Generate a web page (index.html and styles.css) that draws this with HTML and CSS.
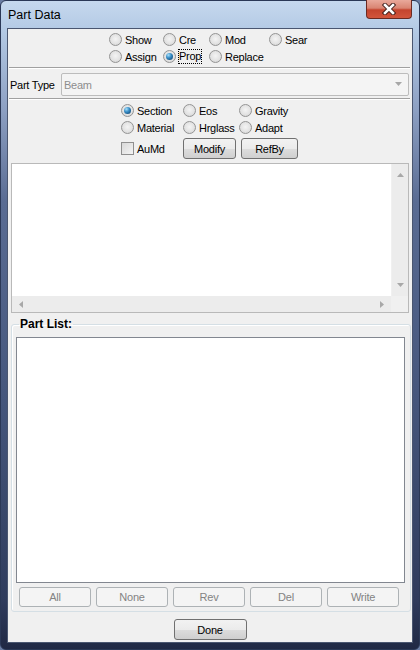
FILE: index.html
```html
<!DOCTYPE html>
<html lang="en">
<head>
    <meta charset="UTF-8">
    <meta name="viewport" content="width=device-width, initial-scale=1.0">
    <title>Part Data</title>
    <link rel="stylesheet" href="styles.css">
</head>
<body>
    <div class="window">
        <div class="titlebar">
            <span class="title">Part Data</span>
            <div class="close-btn">
                <svg width="16" height="12" viewBox="0 0 16 12">
                    <path d="M4 2 L12 10 M12 2 L4 10" stroke="#3a1a16" stroke-width="4.4" stroke-linecap="square"/>
                    <path d="M4 2 L12 10 M12 2 L4 10" stroke="#ffffff" stroke-width="2.6" stroke-linecap="square"/>
                </svg>
            </div>
        </div>

        <div class="client">
            <div class="mode-group">
                <label class="opt"><span class="radio"></span>Show</label>
                <label class="opt"><span class="radio"></span>Cre</label>
                <label class="opt"><span class="radio"></span>Mod</label>
                <label class="opt"><span class="radio"></span>Sear</label>
                <label class="opt"><span class="radio"></span>Assign</label>
                <label class="opt"><span class="radio on"></span><span class="focus">Prop</span></label>
                <label class="opt"><span class="radio"></span>Replace</label>
            </div>
            <div class="sep"></div>

            <div class="type-row">
                <span class="type-label">Part Type</span>
                <div class="combo">
                    <span>Beam</span>
                    <svg width="9" height="5" viewBox="0 0 9 5"><path d="M1 0 L8 0 L4.5 4 Z" fill="#a7a7a7"/></svg>
                </div>
            </div>
            <div class="sep"></div>

            <div class="attr-group">
                <label class="opt"><span class="radio on"></span>Section</label>
                <label class="opt"><span class="radio"></span>Eos</label>
                <label class="opt"><span class="radio"></span>Gravity</label>
                <label class="opt"><span class="radio"></span>Material</label>
                <label class="opt"><span class="radio"></span>Hrglass</label>
                <label class="opt"><span class="radio"></span>Adapt</label>
            </div>
            <div class="attr-actions">
                <label class="check-opt"><span class="checkbox"></span>AuMd</label>
                <button class="btn modify">Modify</button>
                <button class="btn refby">RefBy</button>
            </div>

            <div class="text-box">
                <div class="text-area"></div>
                <div class="vscroll">
                    <svg width="7" height="4" viewBox="0 0 7 4"><path d="M3.5 0 L7 4 L0 4 Z" fill="#a8a8a8"/></svg>
                    <svg width="7" height="4" viewBox="0 0 7 4"><path d="M0 0 L7 0 L3.5 4 Z" fill="#a8a8a8"/></svg>
                </div>
                <div class="hscroll">
                    <svg width="4" height="7" viewBox="0 0 4 7"><path d="M4 0 L4 7 L0 3.5 Z" fill="#a8a8a8"/></svg>
                    <svg width="4" height="7" viewBox="0 0 4 7"><path d="M0 0 L4 3.5 L0 7 Z" fill="#a8a8a8"/></svg>
                </div>
                <div class="corner"></div>
            </div>

            <fieldset class="part-list">
                <legend>Part List:</legend>
                <div class="list-box"></div>
                <div class="list-buttons">
                    <button class="btn off">All</button>
                    <button class="btn off">None</button>
                    <button class="btn off">Rev</button>
                    <button class="btn off">Del</button>
                    <button class="btn off">Write</button>
                </div>
            </fieldset>

            <div class="footer">
                <button class="btn done">Done</button>
            </div>
        </div>
    </div>
</body>
</html>
```

FILE: styles.css
```css
body {
    margin: 0;
    font-family: "Liberation Sans", Arial, sans-serif;
    font-size: 11px;
    letter-spacing: -0.25px;
    color: #000;
    background-color: #6a7da3;
}
.window {
    width: 420px;
    height: 650px;
    box-sizing: border-box;
    display: flex;
    flex-direction: column;
    border-radius: 6px;
    border: 1px solid #2b3856;
    background: linear-gradient(to bottom, #c6d8ee 0, #b3c9e4 30px, #8c9fc2 110px, #5a6c93 200px, #45567c 400px, #2f3b5c 600px, #1f2843 650px);
}
.titlebar {
    height: 27px;
    display: flex;
    justify-content: space-between;
    align-items: flex-start;
}
.title {
    padding: 7px 0 0 7px;
    font-size: 12.5px;
    letter-spacing: 0;
    color: #000;
}
.close-btn {
    width: 44px;
    height: 18px;
    margin-right: 7px;
    margin-top: -1px;
    border: 1px solid #6b2a22;
    border-top: none;
    border-radius: 0 0 4px 4px;
    background: linear-gradient(to bottom, #e9a99b 0, #d98472 45%, #c4442e 55%, #d2553c 100%);
    display: flex;
    justify-content: center;
    align-items: center;
}
.client {
    flex: 1;
    margin: 0 6px 6px 6px;
    border: 1px solid #4a5670;
    background-color: #f0f0f0;
    display: flex;
    flex-direction: column;
}

/* radio / check widgets */
.opt, .check-opt {
    display: flex;
    align-items: center;
    height: 17px;
    white-space: nowrap;
}
.radio {
    width: 11px;
    height: 11px;
    margin-right: 3px;
    border: 1px solid #949494;
    border-radius: 50%;
    background: radial-gradient(circle at 50% 45%, #f4f4f4 0, #e3e3e3 55%, #cfcfcf 100%);
    position: relative;
    flex-shrink: 0;
}
.radio.on::after {
    content: "";
    position: absolute;
    left: 2px;
    top: 2px;
    width: 7px;
    height: 7px;
    border-radius: 50%;
    background: radial-gradient(circle at 35% 30%, #a8e0fb 0, #3b90c8 40%, #1a5a8c 75%, #0f3c64 100%);
}
.checkbox {
    width: 11px;
    height: 11px;
    margin-right: 3px;
    border: 1px solid #8f8f8f;
    background: linear-gradient(135deg, #d8d8d8 0, #f4f4f4 100%);
    flex-shrink: 0;
}
.focus {
    outline: 1px dotted #000;
    outline-offset: 0;
    line-height: 13px;
}

.mode-group {
    display: grid;
    grid-template-columns: 54px 46px 60px auto;
    grid-auto-rows: 17px;
    padding: 2px 0 2px 101px;
}
.sep {
    height: 0;
    margin: 0 2px 0 1px;
    border-top: 1px solid #a0a0a0;
    border-bottom: 1px solid #ffffff;
}
.type-row {
    display: flex;
    align-items: center;
    padding: 4px 0 2px 0;
}
.type-label {
    width: 51px;
    padding-left: 2px;
}
.combo {
    width: 339px;
    height: 21px;
    border: 1px solid #bcbcbc;
    border-radius: 2px;
    background-color: #f4f4f4;
    display: flex;
    align-items: center;
    justify-content: space-between;
    padding: 0 5px 0 2px;
    color: #8d8d8d;
}

.attr-group {
    display: grid;
    grid-template-columns: 62px 56px auto;
    grid-auto-rows: 17px;
    padding: 2px 0 1px 113px;
}
.attr-actions {
    display: flex;
    align-items: center;
    height: 21px;
    margin-top: 1px;
    padding-left: 113px;
}
.check-opt {
    width: 62px;
}

.btn {
    font-family: "Liberation Sans", Arial, sans-serif;
    font-size: 11px;
    letter-spacing: -0.25px;
    height: 21px;
    padding: 0;
    border: 1px solid #707070;
    border-radius: 3px;
    color: #000;
    background: linear-gradient(to bottom, #f2f2f2 0, #ebebeb 50%, #dddddd 51%, #cfcfcf 100%);
}
.modify {
    width: 53px;
}
.refby {
    width: 57px;
    margin-left: 5px;
}
.btn.off {
    width: 72px;
    height: 20px;
    border-color: #adb2b5;
    background: #f4f4f4;
    color: #838383;
}

.text-box {
    height: 148px;
    margin: 4px 3px 0 3px;
    border: 1px solid #b9b9b9;
    display: grid;
    grid-template-columns: 1fr 16px;
    grid-template-rows: 1fr 16px;
    column-gap: 1px;
    background-color: #f0f0f0;
}
.text-area {
    background-color: #fff;
}
.vscroll {
    background-color: #ececec;
    display: flex;
    flex-direction: column;
    justify-content: space-between;
    align-items: center;
    padding: 9px 0 9px 0;
}
.hscroll {
    background-color: #ececec;
    display: flex;
    justify-content: space-between;
    align-items: center;
    padding: 0 7px 0 7px;
}
.corner {
    background-color: #f0f0f0;
}

.part-list {
    margin: 4px 1px 0 3px;
    padding: 6px 5px 4px 4px;
    border: 1px solid #d5dfe5;
    border-radius: 3px;
    box-shadow: inset 1px 1px 0 #fff;
    min-inline-size: 0;
}
.part-list legend {
    margin-left: 3px;
    padding: 0 1px;
    font-size: 12px;
    font-weight: bold;
    letter-spacing: 0;
    line-height: 14px;
}
.list-box {
    height: 244px;
    border: 1px solid #828790;
    background-color: #fff;
}
.list-buttons {
    display: flex;
    gap: 5px;
    margin-top: 4px;
    padding-left: 3px;
}

.footer {
    display: flex;
    justify-content: center;
    margin-top: 7px;
}
.done {
    width: 73px;
    height: 21px;
}
```
